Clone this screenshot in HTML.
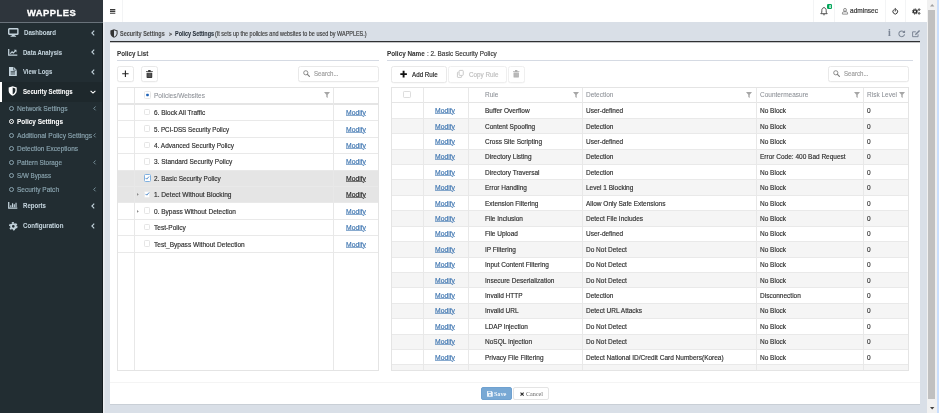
<!DOCTYPE html>
<html>
<head>
<meta charset="utf-8">
<title>WAPPLES</title>
<style>
*{box-sizing:border-box;margin:0;padding:0}
html,body{width:939px;height:413px;overflow:hidden}
body{position:relative;background:#d9dfe7;font-family:"Liberation Sans",sans-serif;font-size:6.5px;color:#333;line-height:1}
.t{position:absolute;white-space:nowrap;line-height:10px;height:10px;transform-origin:0 50%;-webkit-text-stroke:.16px}
.s{font-family:"Liberation Serif",serif}
.b{font-weight:700;-webkit-text-stroke:.05px}
svg{position:absolute;overflow:visible}
div,i{position:absolute}
i{display:block}
#w{left:0;top:0;width:939px;height:413px;will-change:transform}
#side{left:0;top:0;width:103px;height:413px;background:#222d32;border-right:1px solid #141b1f}
#logo{left:0;top:0;width:103px;height:22.6px;background:#2e353c;border-bottom:1px solid #69727a}
.act{left:0;width:102px;background:#1e282c;border-left:2px solid #fff}
.ring{width:5px;height:5px;border:1px solid #8aa4af;border-radius:50%}
#top{left:103px;top:0;width:824px;height:22px;background:#fff}
.vsep{top:0;width:1px;height:22px;background:#f3f4f5}
#sb{left:927px;top:0;width:12px;height:413px;background:#f1f1f1}
#panel{left:110px;top:41px;width:810px;height:363.4px;background:#fff;border-top:1px solid #2f3133;box-shadow:0 .5px .5px rgba(0,0,0,.07)}
.hr{height:1px;background:#d5dae3}
.btn{background:#fff;border:1px solid #e9e9e9;border-radius:2.5px;box-shadow:0 .5px .6px rgba(0,0,0,.04)}
.grid{border:1px solid #e4e4e4;background:#fff;overflow:hidden}
.row{left:0;width:100%;border-bottom:1px solid #e6e6e6}
.vl{top:0;width:1px;height:100%;background:#e8e8e8}
.cb{width:6.6px;height:6.6px;border:1px solid #e5e5e5;border-radius:1.2px;background:#fff}
u{text-decoration:underline;text-decoration-thickness:.5px;text-underline-offset:.3px;text-decoration-color:rgba(59,115,175,.6)}
</style>
</head>
<body>
<div id="w">
<div id="side"></div>
<div id="logo"></div>
<span class="t b" style="left:26.90px;top:8px;font-size:8.90px;color:#fff;transform:scaleX(1.0600);letter-spacing:.45px;-webkit-text-stroke:.3px">WAPPLES</span>
<svg style="left:7.5px;top:27.9px" width="10.6" height="8.8" viewBox="0 0 21 17.5"><rect x="1.4" y="1.4" width="18.2" height="11" rx="1.2" fill="none" stroke="#c3d3dc" stroke-width="2.8"/><path d="M8 13.5H13L13.8 15.6H7.2Z M5 15.4H16V17.5H5Z" fill="#c3d3dc"/></svg>
<span class="t b" style="left:23.75px;top:28px;font-size:7.00px;color:#c3d3dc;transform:scaleX(0.8752);">Dashboard</span>
<svg style="left:90.5px;top:29.5px" width="4.0" height="6.0" viewBox="0 0 4 6"><path d="M3.2 .6 L.9 3 L3.2 5.4" fill="none" stroke="#c3d3dc" stroke-width="1.1"/></svg>
<svg style="left:8.1px;top:48.6px" width="9.4" height="6.8" viewBox="0 0 19 14"><path d="M1.3 0V12.6H19" fill="none" stroke="#c3d3dc" stroke-width="2.6"/><path d="M4.5 9.5L8.2 5.8L10.8 8.2L15 4" fill="none" stroke="#c3d3dc" stroke-width="2.5"/><path d="M11.8 1.6H17.2V7Z" fill="#c3d3dc"/></svg>
<span class="t b" style="left:22.75px;top:48px;font-size:7.00px;color:#c3d3dc;transform:scaleX(0.8543);">Data Analysis</span>
<svg style="left:90.5px;top:49.2px" width="4.0" height="6.0" viewBox="0 0 4 6"><path d="M3.2 .6 L.9 3 L3.2 5.4" fill="none" stroke="#c3d3dc" stroke-width="1.1"/></svg>
<svg style="left:8.9px;top:67.3px" width="7.8" height="9" viewBox="0 0 15.6 18"><path d="M0 0H9.6L15.6 6V18H0Z" fill="#c3d3dc"/><path d="M9.2 .4V6.4H15.2" fill="none" stroke="#222d32" stroke-width="1.3"/><path d="M3.4 9H12.2M3.4 11.6H12.2M3.4 14.2H12.2" stroke="#222d32" stroke-width="1.3"/></svg>
<span class="t b" style="left:23.25px;top:67px;font-size:7.00px;color:#c3d3dc;transform:scaleX(0.8480);">View Logs</span>
<svg style="left:90.5px;top:69px" width="4.0" height="6.0" viewBox="0 0 4 6"><path d="M3.2 .6 L.9 3 L3.2 5.4" fill="none" stroke="#c3d3dc" stroke-width="1.1"/></svg>
<div class="act" style="top:81.5px;height:20px"></div>
<svg style="left:8.1px;top:86.4px" width="9.4" height="9.8" viewBox="0 0 16 18"><path d="M8 .3L15.4 2.9V8.5C15.4 13 12 16.2 8 17.8C4 16.2 .6 13 .6 8.5V2.9Z" fill="#fff"/><path d="M8 2.8V15.2C10.6 13.9 12.9 11.7 12.9 8.3V4.5Z" fill="#1e282c"/></svg>
<span class="t b" style="left:22.75px;top:87px;font-size:7.00px;color:#fff;transform:scaleX(0.8656);">Security Settings</span>
<svg style="left:90px;top:89.8px" width="6" height="4" viewBox="0 0 6 4"><path d="M.6 .8 L3 3.1 L5.4 .8" fill="none" stroke="#fff" stroke-width="1.1"/></svg>
<svg style="left:8.1px;top:202.1px" width="9.4" height="6.8" viewBox="0 0 19 14"><path d="M1.3 0V12.6H19" fill="none" stroke="#c3d3dc" stroke-width="2.6"/><path d="M4.4 6.5H6.8V10.6H4.4Z M8 2.6H10.4V10.6H8Z M11.6 4.8H14V10.6H11.6Z M15.2 1.4H17.6V10.6H15.2Z" fill="#c3d3dc"/></svg>
<span class="t b" style="left:22.90px;top:201px;font-size:7.00px;color:#c3d3dc;transform:scaleX(0.8658);">Reports</span>
<svg style="left:90.5px;top:202.7px" width="4.0" height="6.0" viewBox="0 0 4 6"><path d="M3.2 .6 L.9 3 L3.2 5.4" fill="none" stroke="#c3d3dc" stroke-width="1.1"/></svg>
<svg style="left:8.5px;top:221.5px" width="8.6" height="8.6" viewBox="0 0 16 16"><circle cx="8" cy="8" r="4.2" fill="none" stroke="#c3d3dc" stroke-width="3.4"/><circle cx="8" cy="8" r="6.6" fill="none" stroke="#c3d3dc" stroke-width="2.8" stroke-dasharray="3.7 3.21"/></svg>
<span class="t b" style="left:22.90px;top:221px;font-size:7.00px;color:#c3d3dc;transform:scaleX(0.8805);">Configuration</span>
<svg style="left:90.5px;top:223px" width="4.0" height="6.0" viewBox="0 0 4 6"><path d="M3.2 .6 L.9 3 L3.2 5.4" fill="none" stroke="#c3d3dc" stroke-width="1.1"/></svg>
<i class="ring" style="left:8.6px;top:105.80px;border-color:#8aa4af"></i>
<span class="t" style="left:17.00px;top:104px;font-size:7.00px;color:#8aa4af;transform:scaleX(0.9544);">Network Settings</span>
<svg style="left:93px;top:105.9px" width="3.2" height="4.800000000000001" viewBox="0 0 4 6"><path d="M3.2 .6 L.9 3 L3.2 5.4" fill="none" stroke="#8aa4af" stroke-width="1.0"/></svg>
<i class="ring" style="left:8.6px;top:119.15px;border-color:#fff"></i>
<i style="left:10.5px;top:121.05px;width:1.2px;height:1.2px;background:#fff;border-radius:50%"></i>
<span class="t b" style="left:17.00px;top:117px;font-size:7.00px;color:#fff;transform:scaleX(0.9167);">Policy Settings</span>
<i class="ring" style="left:8.6px;top:132.60px;border-color:#8aa4af"></i>
<span class="t" style="left:17.00px;top:131px;font-size:7.00px;color:#8aa4af;transform:scaleX(0.9542);">Additional Policy Settings</span>
<svg style="left:93px;top:132.7px" width="3.2" height="4.800000000000001" viewBox="0 0 4 6"><path d="M3.2 .6 L.9 3 L3.2 5.4" fill="none" stroke="#8aa4af" stroke-width="1.0"/></svg>
<i class="ring" style="left:8.6px;top:146.40px;border-color:#8aa4af"></i>
<span class="t" style="left:17.00px;top:144px;font-size:7.00px;color:#8aa4af;transform:scaleX(0.9276);">Detection Exceptions</span>
<i class="ring" style="left:8.6px;top:159.90px;border-color:#8aa4af"></i>
<span class="t" style="left:17.00px;top:158px;font-size:7.00px;color:#8aa4af;transform:scaleX(0.9178);">Pattern Storage</span>
<svg style="left:93px;top:160.0px" width="3.2" height="4.800000000000001" viewBox="0 0 4 6"><path d="M3.2 .6 L.9 3 L3.2 5.4" fill="none" stroke="#8aa4af" stroke-width="1.0"/></svg>
<i class="ring" style="left:8.6px;top:173.40px;border-color:#8aa4af"></i>
<span class="t" style="left:17.00px;top:171px;font-size:7.00px;color:#8aa4af;transform:scaleX(0.8919);">S/W Bypass</span>
<i class="ring" style="left:8.6px;top:186.90px;border-color:#8aa4af"></i>
<span class="t" style="left:17.00px;top:185px;font-size:7.00px;color:#8aa4af;transform:scaleX(0.9306);">Security Patch</span>
<svg style="left:93px;top:187.0px" width="3.2" height="4.800000000000001" viewBox="0 0 4 6"><path d="M3.2 .6 L.9 3 L3.2 5.4" fill="none" stroke="#8aa4af" stroke-width="1.0"/></svg>
<div id="top"></div>
<svg style="left:109.8px;top:8.9px" width="5.3" height="4.8" viewBox="0 0 10 9"><path d="M0 1.1H10M0 4.5H10M0 7.9H10" stroke="#3a3a3a" stroke-width="2.1"/></svg>
<i class="vsep" style="left:122px"></i>
<i class="vsep" style="left:813px"></i>
<i class="vsep" style="left:834px"></i>
<i class="vsep" style="left:885px"></i>
<i class="vsep" style="left:905px"></i>
<svg style="left:820px;top:7px" width="8" height="9" viewBox="0 0 16 18"><path d="M8 1.2C4.8 1.8 3.6 4.2 3.6 7V10.5L1.6 13.4H14.4L12.4 10.5V7C12.4 4.2 11.2 1.8 8 1.2Z" fill="none" stroke="#333" stroke-width="1.7" stroke-linejoin="round"/><path d="M6.3 15Q8 17.4 9.7 15" fill="none" stroke="#333" stroke-width="1.5"/></svg>
<i style="left:827px;top:3.7px;width:5.4px;height:5.4px;background:#00a65a;border-radius:1.3px"></i>
<span class="t b" style="left:828.60px;top:2px;font-size:4.40px;color:#fff;transform:scaleX(0.9000);">0</span>
<svg style="left:841.5px;top:8px" width="6" height="6.5" viewBox="0 0 12 13"><circle cx="6" cy="3.8" r="2.9" fill="none" stroke="#555" stroke-width="1.3"/><path d="M.9 12.2V10.5Q.9 7.6 3.8 7.3Q6 8.6 8.2 7.3Q11.1 7.6 11.1 10.5V12.2Z" fill="none" stroke="#555" stroke-width="1.3"/></svg>
<span class="t" style="left:849.70px;top:6px;font-size:7.60px;color:#333;transform:scaleX(0.8608);-webkit-text-stroke:.2px">adminsec</span>
<svg style="left:892.1px;top:7.9px" width="6.5" height="6.5" viewBox="0 0 14 14"><path d="M4.3 3.2A5.2 5.2 0 1 0 9.7 3.2" fill="none" stroke="#222" stroke-width="1.9" stroke-linecap="round"/><path d="M7 .8V6.6" stroke="#222" stroke-width="1.9" stroke-linecap="round"/></svg>
<svg style="left:911.5px;top:7.5px" width="9" height="7" viewBox="0 0 18 14"><circle cx="6" cy="7" r="3.2" fill="none" stroke="#222" stroke-width="2.6"/><circle cx="6" cy="7" r="5.2" fill="none" stroke="#222" stroke-width="2" stroke-dasharray="2 2.08"/><circle cx="14.2" cy="3.2" r="1.6" fill="none" stroke="#222" stroke-width="1.8"/><circle cx="14.2" cy="10.8" r="1.6" fill="none" stroke="#222" stroke-width="1.8"/></svg>
<svg style="left:109.7px;top:29.3px" width="8" height="9" viewBox="0 0 16 18"><path d="M8 .5L15.2 3V8.5C15.2 13 12 16 8 17.6C4 16 .8 13 .8 8.5V3Z" fill="#333"/><path d="M8 2.6V15.4C10.8 14 13.2 11.8 13.2 8.3V4.3Z" fill="#d9dfe7"/></svg>
<span class="t b" style="left:119.70px;top:29px;font-size:6.40px;color:#4d4d4d;transform:scaleX(0.8569);-webkit-text-stroke:.08px">Security Settings</span>
<span class="t b" style="left:168.50px;top:29px;font-size:5.60px;color:#4d4d4d;transform:scaleX(0.9173);-webkit-text-stroke:.2px">&gt;</span>
<span class="t b" style="left:174.90px;top:29px;font-size:6.40px;color:#27303a;transform:scaleX(0.8522);-webkit-text-stroke:.08px">Policy Settings</span>
<span class="t" style="left:215.40px;top:29px;font-size:6.50px;color:#3c3c3c;transform:scaleX(0.8403);">(It sets up the policies and websites to be used by WAPPLES.)</span>
<span class="t b s" style="left:887.60px;top:28px;font-size:10.50px;color:#7a8494;transform:scaleX(0.9500);">i</span>
<svg style="left:897.9px;top:29.6px" width="7.4" height="7.4" viewBox="0 0 14 14"><path d="M11.6 4.2A5.4 5.4 0 1 0 12.4 8" fill="none" stroke="#7a8494" stroke-width="1.9"/><path d="M13.4 .6V5.8H8.2Z" fill="#7a8494"/></svg>
<svg style="left:911.6px;top:29.5px" width="8.6" height="7.6" viewBox="0 0 17 15"><path d="M12 8.4V13.2H1.2V3.6H7.6" fill="none" stroke="#7a8494" stroke-width="1.9"/><path d="M6 10.2L8.6 9.6L16 2.2L14 .2L6.6 7.6Z" fill="#7a8494"/></svg>
<div id="panel"></div>
<i style="left:110px;top:42px;width:810px;height:1px;background:#c4c5c7"></i>
<i style="left:103px;top:22px;width:1px;height:391px;background:#eaedf1"></i><i style="left:104px;top:22px;width:1px;height:391px;background:#e2e5eb"></i>
<i class="hr" style="left:110px;top:382px;width:810px;background:#f4f4f4"></i>
<span class="t b" style="left:116.50px;top:49px;font-size:7.00px;color:#333;transform:scaleX(0.8926);">Policy List</span>
<i class="hr" style="left:116.5px;top:59.8px;width:262.8px"></i>
<span class="t b" style="left:386.75px;top:49px;font-size:7.00px;color:#333;transform:scaleX(0.9068);">Policy Name</span>
<span class="t" style="left:426.50px;top:49px;font-size:7.00px;color:#333;transform:scaleX(0.9101);">: 2. Basic Security Policy</span>
<i class="hr" style="left:386.8px;top:59.8px;width:526.4px"></i>
<div class="btn" style="left:117px;top:66px;width:17px;height:16px;border-color:#e9e9e9"></div>
<svg style="left:0;top:0" width="1" height="1"><path d="M125.4 70.6V77.0M122.2 73.8H128.6" stroke="#222" stroke-width="1.1" fill="none"/></svg>
<div class="btn" style="left:141px;top:66px;width:17px;height:16px;border-color:#e9e9e9"></div>
<svg style="left:145.7px;top:69.8px" width="6.8" height="8" viewBox="0 0 12 14"><path d="M0 2H12V3.6H0Z M3.8 0H8.2V2H3.8Z M1 4.6H11V12.8Q11 14 9.8 14H2.2Q1 14 1 12.8Z" fill="#3a3a3a"/><path d="M3.7 5.6V12.4M6 5.6V12.4M8.3 5.6V12.4" stroke="#fff" stroke-opacity=".35" stroke-width=".9"/></svg>
<div class="btn" style="left:298px;top:66px;width:81px;height:16px;border-color:#e9e9e9"></div>
<svg style="left:303.2px;top:70.4px" width="7" height="7" viewBox="0 0 14 14"><circle cx="5.6" cy="5.6" r="4.2" fill="none" stroke="#808080" stroke-width="1.8"/><path d="M8.8 8.8L12.8 12.8" stroke="#808080" stroke-width="2.4" stroke-linecap="round"/></svg>
<span class="t" style="left:314.00px;top:69px;font-size:7.00px;color:#9c9c9c;transform:scaleX(0.8746);">Search...</span>
<div class="btn" style="left:391px;top:66px;width:56px;height:17px;border-color:#e9e9e9"></div>
<svg style="left:0;top:0" width="1" height="1"><path d="M403.6 70.8V77.39999999999999M400.3 74.1H406.90000000000003" stroke="#111" stroke-width="1.9" fill="none"/></svg>
<span class="t" style="left:411.80px;top:70px;font-size:7.00px;color:#222;transform:scaleX(0.8924);">Add Rule</span>
<div class="btn" style="left:448px;top:66px;width:59px;height:17px;border-color:#efefef"></div>
<svg style="left:456.8px;top:70.2px" width="6.8" height="7.8" viewBox="0 0 13 15"><rect x="4" y=".8" width="8" height="9.6" rx="1.4" fill="none" stroke="#bdbdbd" stroke-width="1.5"/><path d="M3 4.2H1.8Q.8 4.2 .8 5.2V13.2Q.8 14.2 1.8 14.2H7.8Q8.8 14.2 8.8 13.2V11.6" fill="none" stroke="#bdbdbd" stroke-width="1.5"/></svg>
<span class="t" style="left:469.00px;top:70px;font-size:7.00px;color:#bdbdbd;transform:scaleX(0.9026);">Copy Rule</span>
<div class="btn" style="left:508px;top:66px;width:17px;height:17px;border-color:#efefef"></div>
<svg style="left:513.2px;top:70.4px" width="6.4" height="7.6" viewBox="0 0 12 14"><path d="M0 2H12V3.6H0Z M3.8 0H8.2V2H3.8Z M1 4.6H11V12.8Q11 14 9.8 14H2.2Q1 14 1 12.8Z" fill="#b0b0b0"/><path d="M3.7 5.6V12.4M6 5.6V12.4M8.3 5.6V12.4" stroke="#fff" stroke-opacity=".35" stroke-width=".9"/></svg>
<div class="btn" style="left:828px;top:66px;width:81px;height:16px;border-color:#e9e9e9"></div>
<svg style="left:833.2px;top:70.4px" width="7" height="7" viewBox="0 0 14 14"><circle cx="5.6" cy="5.6" r="4.2" fill="none" stroke="#808080" stroke-width="1.8"/><path d="M8.8 8.8L12.8 12.8" stroke="#808080" stroke-width="2.4" stroke-linecap="round"/></svg>
<span class="t" style="left:844.30px;top:69px;font-size:7.00px;color:#9c9c9c;transform:scaleX(0.8746);">Search...</span>
<div class="grid" style="left:117.3px;top:86.7px;width:261.5px;height:283.90000000000003px"></div>
<i style="left:118.3px;top:170.60px;width:259.5px;height:16.45px;background:#e5e5e5"></i>
<i style="left:118.3px;top:187.05px;width:259.5px;height:16.45px;background:#e5e5e5"></i>
<i style="left:118.3px;top:103.4px;width:259.5px;height:1.2px;background:#e5e5e5"></i>
<i style="left:118.3px;top:120.15px;width:259.5px;height:1px;background:#e9e9e9"></i>
<i style="left:118.3px;top:136.60px;width:259.5px;height:1px;background:#e9e9e9"></i>
<i style="left:118.3px;top:153.05px;width:259.5px;height:1px;background:#e9e9e9"></i>
<i style="left:118.3px;top:169.50px;width:259.5px;height:1px;background:#e9e9e9"></i>
<i style="left:118.3px;top:185.95px;width:259.5px;height:1px;background:#e9e9e9"></i>
<i style="left:118.3px;top:202.40px;width:259.5px;height:1px;background:#e9e9e9"></i>
<i style="left:118.3px;top:218.85px;width:259.5px;height:1px;background:#e9e9e9"></i>
<i style="left:118.3px;top:235.30px;width:259.5px;height:1px;background:#e9e9e9"></i>
<i style="left:118.3px;top:251.75px;width:259.5px;height:1px;background:#e9e9e9"></i>
<i class="vl" style="left:133.8px;top:87.7px;height:281.90000000000003px"></i>
<i class="vl" style="left:333.3px;top:87.7px;height:281.90000000000003px"></i>
<i class="cb" style="left:144px;top:91.4px;width:7px;height:7.2px;border-color:#e6e6e6;border-radius:1.5px"></i><svg style="left:0;top:0" width="1" height="1"><rect x="146.2" y="93.7" width="2.6" height="2.6" rx=".7" fill="#1f63b8"/></svg>
<span class="t" style="left:154.10px;top:91px;font-size:7.00px;color:#8a8e94;transform:scaleX(0.9319);-webkit-text-stroke:.05px">Policies/Websites</span>
<svg style="left:324.00px;top:92.45px" width="6" height="6" viewBox="0 0 6 6"><path d="M0 0H6L3.7 2.8V6L2.3 5V2.8Z" fill="#a6a6a6"/></svg>
<i class="cb" style="left:143.8px;top:108.73px"></i>
<span class="t" style="left:153.75px;top:108px;font-size:7.00px;color:#2e2e2e;transform:scaleX(0.9299);">6. Block All Traffic</span>
<span class="t" style="left:345.80px;top:108px;font-size:7.00px;color:#3b73af;transform:scaleX(0.9700);"><u>Modify</u></span>
<i class="cb" style="left:143.8px;top:125.17px"></i>
<span class="t" style="left:153.75px;top:125px;font-size:7.00px;color:#2e2e2e;transform:scaleX(0.8926);">5. PCI-DSS Security Policy</span>
<span class="t" style="left:345.80px;top:125px;font-size:7.00px;color:#3b73af;transform:scaleX(0.9700);"><u>Modify</u></span>
<i class="cb" style="left:143.8px;top:141.62px"></i>
<span class="t" style="left:153.75px;top:141px;font-size:7.00px;color:#2e2e2e;transform:scaleX(0.9261);">4. Advanced Security Policy</span>
<span class="t" style="left:345.80px;top:141px;font-size:7.00px;color:#3b73af;transform:scaleX(0.9700);"><u>Modify</u></span>
<i class="cb" style="left:143.8px;top:158.07px"></i>
<span class="t" style="left:153.75px;top:157px;font-size:7.00px;color:#2e2e2e;transform:scaleX(0.9311);">3. Standard Security Policy</span>
<span class="t" style="left:345.80px;top:157px;font-size:7.00px;color:#3b73af;transform:scaleX(0.9700);"><u>Modify</u></span>
<i class="cb" style="left:143.5px;top:174.22px;width:7.3px;height:7.3px;border:1px solid #7fb0e0;border-radius:1.5px"></i><svg style="left:145px;top:175.82px" width="4.6" height="3.8" viewBox="0 0 8 7"><path d="M.8 3.6L3 5.8L7.2 1" fill="none" stroke="#2f74c0" stroke-width="1.5"/></svg>
<span class="t" style="left:153.75px;top:174px;font-size:7.00px;color:#2e2e2e;transform:scaleX(0.9175);">2. Basic Security Policy</span>
<span class="t" style="left:345.80px;top:174px;font-size:7.00px;color:#222;transform:scaleX(0.9700);"><u style="text-decoration-color:rgba(40,40,40,.6)">Modify</u></span>
<i class="cb" style="left:143.8px;top:190.97px;border-color:#ececec;background:#fff"></i><svg style="left:144.9px;top:192.27px" width="4.6" height="3.8" viewBox="0 0 8 7"><path d="M.8 3.6L3 5.8L7.2 1" fill="none" stroke="#2f74c0" stroke-width="1.6"/></svg>
<svg style="left:137.4px;top:193.17px" width="1.8" height="2.8" viewBox="0 0 2 3"><path d="M0 0L2 1.5L0 3Z" fill="#8a8a8a"/></svg>
<span class="t" style="left:153.75px;top:190px;font-size:7.00px;color:#2e2e2e;transform:scaleX(0.9440);">1. Detect Without Blocking</span>
<span class="t" style="left:345.80px;top:190px;font-size:7.00px;color:#222;transform:scaleX(0.9700);"><u style="text-decoration-color:rgba(40,40,40,.6)">Modify</u></span>
<i class="cb" style="left:143.8px;top:207.42px"></i>
<svg style="left:137.4px;top:209.62px" width="1.8" height="2.8" viewBox="0 0 2 3"><path d="M0 0L2 1.5L0 3Z" fill="#8a8a8a"/></svg>
<span class="t" style="left:153.75px;top:207px;font-size:7.00px;color:#2e2e2e;transform:scaleX(0.9325);">0. Bypass Without Detection</span>
<span class="t" style="left:345.80px;top:207px;font-size:7.00px;color:#3b73af;transform:scaleX(0.9700);"><u>Modify</u></span>
<i class="cb" style="left:143.8px;top:223.87px"></i>
<span class="t" style="left:153.75px;top:223px;font-size:7.00px;color:#2e2e2e;transform:scaleX(0.9397);">Test-Policy</span>
<span class="t" style="left:345.80px;top:223px;font-size:7.00px;color:#3b73af;transform:scaleX(0.9700);"><u>Modify</u></span>
<i class="cb" style="left:143.8px;top:240.32px"></i>
<span class="t" style="left:153.75px;top:240px;font-size:7.00px;color:#2e2e2e;transform:scaleX(0.9362);">Test_Bypass Without Detection</span>
<span class="t" style="left:345.80px;top:240px;font-size:7.00px;color:#3b73af;transform:scaleX(0.9700);"><u>Modify</u></span>
<div class="grid" style="left:391.3px;top:86.7px;width:517.5999999999999px;height:283.90000000000003px"></div>
<i style="left:392.3px;top:118.35px;width:515.5999999999999px;height:15.41px;background:#f5f5f5"></i>
<i style="left:392.3px;top:149.17px;width:515.5999999999999px;height:15.41px;background:#f5f5f5"></i>
<i style="left:392.3px;top:179.99px;width:515.5999999999999px;height:15.41px;background:#f5f5f5"></i>
<i style="left:392.3px;top:210.81px;width:515.5999999999999px;height:15.41px;background:#f5f5f5"></i>
<i style="left:392.3px;top:241.63px;width:515.5999999999999px;height:15.41px;background:#f5f5f5"></i>
<i style="left:392.3px;top:272.45px;width:515.5999999999999px;height:15.41px;background:#f5f5f5"></i>
<i style="left:392.3px;top:303.27px;width:515.5999999999999px;height:15.41px;background:#f5f5f5"></i>
<i style="left:392.3px;top:334.09px;width:515.5999999999999px;height:15.41px;background:#f5f5f5"></i>
<i style="left:392.3px;top:364.91px;width:515.5999999999999px;height:4.69px;background:#f5f5f5"></i>
<i style="left:392.3px;top:101.5px;width:515.5999999999999px;height:1.2px;background:#e5e5e5"></i>
<i style="left:392.3px;top:117.85px;width:515.5999999999999px;height:1px;background:#e9e9e9"></i>
<i style="left:392.3px;top:133.26px;width:515.5999999999999px;height:1px;background:#e9e9e9"></i>
<i style="left:392.3px;top:148.67px;width:515.5999999999999px;height:1px;background:#e9e9e9"></i>
<i style="left:392.3px;top:164.08px;width:515.5999999999999px;height:1px;background:#e9e9e9"></i>
<i style="left:392.3px;top:179.49px;width:515.5999999999999px;height:1px;background:#e9e9e9"></i>
<i style="left:392.3px;top:194.90px;width:515.5999999999999px;height:1px;background:#e9e9e9"></i>
<i style="left:392.3px;top:210.31px;width:515.5999999999999px;height:1px;background:#e9e9e9"></i>
<i style="left:392.3px;top:225.72px;width:515.5999999999999px;height:1px;background:#e9e9e9"></i>
<i style="left:392.3px;top:241.13px;width:515.5999999999999px;height:1px;background:#e9e9e9"></i>
<i style="left:392.3px;top:256.54px;width:515.5999999999999px;height:1px;background:#e9e9e9"></i>
<i style="left:392.3px;top:271.95px;width:515.5999999999999px;height:1px;background:#e9e9e9"></i>
<i style="left:392.3px;top:287.36px;width:515.5999999999999px;height:1px;background:#e9e9e9"></i>
<i style="left:392.3px;top:302.77px;width:515.5999999999999px;height:1px;background:#e9e9e9"></i>
<i style="left:392.3px;top:318.18px;width:515.5999999999999px;height:1px;background:#e9e9e9"></i>
<i style="left:392.3px;top:333.59px;width:515.5999999999999px;height:1px;background:#e9e9e9"></i>
<i style="left:392.3px;top:349.00px;width:515.5999999999999px;height:1px;background:#e9e9e9"></i>
<i style="left:392.3px;top:364.41px;width:515.5999999999999px;height:1px;background:#e9e9e9"></i>
<i class="vl" style="left:423.2px;top:87.7px;height:281.90000000000003px"></i>
<i class="vl" style="left:468px;top:87.7px;height:281.90000000000003px"></i>
<i class="vl" style="left:581.9px;top:87.7px;height:281.90000000000003px"></i>
<i class="vl" style="left:756px;top:87.7px;height:281.90000000000003px"></i>
<i class="vl" style="left:863.3px;top:87.7px;height:281.90000000000003px"></i>
<i class="cb" style="left:403.4px;top:90.90px;width:7.2px;height:7.2px;border-color:#ddd"></i>
<span class="t" style="left:484.60px;top:90px;font-size:7.00px;color:#8a8e94;transform:scaleX(0.9286);-webkit-text-stroke:.05px">Rule</span>
<span class="t" style="left:585.80px;top:90px;font-size:7.00px;color:#8a8e94;transform:scaleX(0.9286);-webkit-text-stroke:.05px">Detection</span>
<span class="t" style="left:759.50px;top:90px;font-size:7.00px;color:#8a8e94;transform:scaleX(0.9286);-webkit-text-stroke:.05px">Countermeasure</span>
<span class="t" style="left:867.00px;top:90px;font-size:7.00px;color:#8a8e94;transform:scaleX(0.9286);-webkit-text-stroke:.05px">Risk Level</span>
<svg style="left:573.00px;top:91.50px" width="6" height="6" viewBox="0 0 6 6"><path d="M0 0H6L3.7 2.8V6L2.3 5V2.8Z" fill="#a6a6a6"/></svg>
<svg style="left:746.20px;top:91.50px" width="6" height="6" viewBox="0 0 6 6"><path d="M0 0H6L3.7 2.8V6L2.3 5V2.8Z" fill="#a6a6a6"/></svg>
<svg style="left:854.00px;top:91.50px" width="6" height="6" viewBox="0 0 6 6"><path d="M0 0H6L3.7 2.8V6L2.3 5V2.8Z" fill="#a6a6a6"/></svg>
<svg style="left:899.20px;top:91.50px" width="6" height="6" viewBox="0 0 6 6"><path d="M0 0H6L3.7 2.8V6L2.3 5V2.8Z" fill="#a6a6a6"/></svg>
<span class="t" style="left:435.00px;top:106px;font-size:7.00px;color:#3b73af;transform:scaleX(0.9700);"><u>Modify</u></span>
<span class="t" style="left:484.60px;top:106px;font-size:7.00px;color:#2e2e2e;transform:scaleX(0.9286);">Buffer Overflow</span>
<span class="t" style="left:585.80px;top:106px;font-size:7.00px;color:#2e2e2e;transform:scaleX(0.9286);">User-defined</span>
<span class="t" style="left:759.50px;top:106px;font-size:7.00px;color:#2e2e2e;transform:scaleX(0.9286);">No Block</span>
<span class="t" style="left:867.00px;top:106px;font-size:7.00px;color:#2e2e2e;transform:scaleX(0.9286);">0</span>
<span class="t" style="left:435.00px;top:122px;font-size:7.00px;color:#3b73af;transform:scaleX(0.9700);"><u>Modify</u></span>
<span class="t" style="left:484.60px;top:122px;font-size:7.00px;color:#2e2e2e;transform:scaleX(0.9286);">Content Spoofing</span>
<span class="t" style="left:585.80px;top:122px;font-size:7.00px;color:#2e2e2e;transform:scaleX(0.9286);">Detection</span>
<span class="t" style="left:759.50px;top:122px;font-size:7.00px;color:#2e2e2e;transform:scaleX(0.9286);">No Block</span>
<span class="t" style="left:867.00px;top:122px;font-size:7.00px;color:#2e2e2e;transform:scaleX(0.9286);">0</span>
<span class="t" style="left:435.00px;top:137px;font-size:7.00px;color:#3b73af;transform:scaleX(0.9700);"><u>Modify</u></span>
<span class="t" style="left:484.60px;top:137px;font-size:7.00px;color:#2e2e2e;transform:scaleX(0.9286);">Cross Site Scripting</span>
<span class="t" style="left:585.80px;top:137px;font-size:7.00px;color:#2e2e2e;transform:scaleX(0.9286);">User-defined</span>
<span class="t" style="left:759.50px;top:137px;font-size:7.00px;color:#2e2e2e;transform:scaleX(0.9286);">No Block</span>
<span class="t" style="left:867.00px;top:137px;font-size:7.00px;color:#2e2e2e;transform:scaleX(0.9286);">0</span>
<span class="t" style="left:435.00px;top:152px;font-size:7.00px;color:#3b73af;transform:scaleX(0.9700);"><u>Modify</u></span>
<span class="t" style="left:484.60px;top:152px;font-size:7.00px;color:#2e2e2e;transform:scaleX(0.9286);">Directory Listing</span>
<span class="t" style="left:585.80px;top:152px;font-size:7.00px;color:#2e2e2e;transform:scaleX(0.9286);">Detection</span>
<span class="t" style="left:759.50px;top:152px;font-size:7.00px;color:#2e2e2e;transform:scaleX(0.9286);">Error Code: 400 Bad Request</span>
<span class="t" style="left:867.00px;top:152px;font-size:7.00px;color:#2e2e2e;transform:scaleX(0.9286);">0</span>
<span class="t" style="left:435.00px;top:168px;font-size:7.00px;color:#3b73af;transform:scaleX(0.9700);"><u>Modify</u></span>
<span class="t" style="left:484.60px;top:168px;font-size:7.00px;color:#2e2e2e;transform:scaleX(0.9286);">Directory Traversal</span>
<span class="t" style="left:585.80px;top:168px;font-size:7.00px;color:#2e2e2e;transform:scaleX(0.9286);">Detection</span>
<span class="t" style="left:759.50px;top:168px;font-size:7.00px;color:#2e2e2e;transform:scaleX(0.9286);">No Block</span>
<span class="t" style="left:867.00px;top:168px;font-size:7.00px;color:#2e2e2e;transform:scaleX(0.9286);">0</span>
<span class="t" style="left:435.00px;top:183px;font-size:7.00px;color:#3b73af;transform:scaleX(0.9700);"><u>Modify</u></span>
<span class="t" style="left:484.60px;top:183px;font-size:7.00px;color:#2e2e2e;transform:scaleX(0.9286);">Error Handling</span>
<span class="t" style="left:585.80px;top:183px;font-size:7.00px;color:#2e2e2e;transform:scaleX(0.9286);">Level 1 Blocking</span>
<span class="t" style="left:759.50px;top:183px;font-size:7.00px;color:#2e2e2e;transform:scaleX(0.9286);">No Block</span>
<span class="t" style="left:867.00px;top:183px;font-size:7.00px;color:#2e2e2e;transform:scaleX(0.9286);">0</span>
<span class="t" style="left:435.00px;top:199px;font-size:7.00px;color:#3b73af;transform:scaleX(0.9700);"><u>Modify</u></span>
<span class="t" style="left:484.60px;top:199px;font-size:7.00px;color:#2e2e2e;transform:scaleX(0.9286);">Extension Filtering</span>
<span class="t" style="left:585.80px;top:199px;font-size:7.00px;color:#2e2e2e;transform:scaleX(0.9286);">Allow Only Safe Extensions</span>
<span class="t" style="left:759.50px;top:199px;font-size:7.00px;color:#2e2e2e;transform:scaleX(0.9286);">No Block</span>
<span class="t" style="left:867.00px;top:199px;font-size:7.00px;color:#2e2e2e;transform:scaleX(0.9286);">0</span>
<span class="t" style="left:435.00px;top:214px;font-size:7.00px;color:#3b73af;transform:scaleX(0.9700);"><u>Modify</u></span>
<span class="t" style="left:484.60px;top:214px;font-size:7.00px;color:#2e2e2e;transform:scaleX(0.9286);">File Inclusion</span>
<span class="t" style="left:585.80px;top:214px;font-size:7.00px;color:#2e2e2e;transform:scaleX(0.9286);">Detect File Includes</span>
<span class="t" style="left:759.50px;top:214px;font-size:7.00px;color:#2e2e2e;transform:scaleX(0.9286);">No Block</span>
<span class="t" style="left:867.00px;top:214px;font-size:7.00px;color:#2e2e2e;transform:scaleX(0.9286);">0</span>
<span class="t" style="left:435.00px;top:229px;font-size:7.00px;color:#3b73af;transform:scaleX(0.9700);"><u>Modify</u></span>
<span class="t" style="left:484.60px;top:229px;font-size:7.00px;color:#2e2e2e;transform:scaleX(0.9286);">File Upload</span>
<span class="t" style="left:585.80px;top:229px;font-size:7.00px;color:#2e2e2e;transform:scaleX(0.9286);">User-defined</span>
<span class="t" style="left:759.50px;top:229px;font-size:7.00px;color:#2e2e2e;transform:scaleX(0.9286);">No Block</span>
<span class="t" style="left:867.00px;top:229px;font-size:7.00px;color:#2e2e2e;transform:scaleX(0.9286);">0</span>
<span class="t" style="left:435.00px;top:245px;font-size:7.00px;color:#3b73af;transform:scaleX(0.9700);"><u>Modify</u></span>
<span class="t" style="left:484.60px;top:245px;font-size:7.00px;color:#2e2e2e;transform:scaleX(0.9286);">IP Filtering</span>
<span class="t" style="left:585.80px;top:245px;font-size:7.00px;color:#2e2e2e;transform:scaleX(0.9286);">Do Not Detect</span>
<span class="t" style="left:759.50px;top:245px;font-size:7.00px;color:#2e2e2e;transform:scaleX(0.9286);">No Block</span>
<span class="t" style="left:867.00px;top:245px;font-size:7.00px;color:#2e2e2e;transform:scaleX(0.9286);">0</span>
<span class="t" style="left:435.00px;top:260px;font-size:7.00px;color:#3b73af;transform:scaleX(0.9700);"><u>Modify</u></span>
<span class="t" style="left:484.60px;top:260px;font-size:7.00px;color:#2e2e2e;transform:scaleX(0.9286);">Input Content Filtering</span>
<span class="t" style="left:585.80px;top:260px;font-size:7.00px;color:#2e2e2e;transform:scaleX(0.9286);">Do Not Detect</span>
<span class="t" style="left:759.50px;top:260px;font-size:7.00px;color:#2e2e2e;transform:scaleX(0.9286);">No Block</span>
<span class="t" style="left:867.00px;top:260px;font-size:7.00px;color:#2e2e2e;transform:scaleX(0.9286);">0</span>
<span class="t" style="left:435.00px;top:276px;font-size:7.00px;color:#3b73af;transform:scaleX(0.9700);"><u>Modify</u></span>
<span class="t" style="left:484.60px;top:276px;font-size:7.00px;color:#2e2e2e;transform:scaleX(0.9286);">Insecure Deserialization</span>
<span class="t" style="left:585.80px;top:276px;font-size:7.00px;color:#2e2e2e;transform:scaleX(0.9286);">Do Not Detect</span>
<span class="t" style="left:759.50px;top:276px;font-size:7.00px;color:#2e2e2e;transform:scaleX(0.9286);">No Block</span>
<span class="t" style="left:867.00px;top:276px;font-size:7.00px;color:#2e2e2e;transform:scaleX(0.9286);">0</span>
<span class="t" style="left:435.00px;top:291px;font-size:7.00px;color:#3b73af;transform:scaleX(0.9700);"><u>Modify</u></span>
<span class="t" style="left:484.60px;top:291px;font-size:7.00px;color:#2e2e2e;transform:scaleX(0.9286);">Invalid HTTP</span>
<span class="t" style="left:585.80px;top:291px;font-size:7.00px;color:#2e2e2e;transform:scaleX(0.9286);">Detection</span>
<span class="t" style="left:759.50px;top:291px;font-size:7.00px;color:#2e2e2e;transform:scaleX(0.9286);">Disconnection</span>
<span class="t" style="left:867.00px;top:291px;font-size:7.00px;color:#2e2e2e;transform:scaleX(0.9286);">0</span>
<span class="t" style="left:435.00px;top:306px;font-size:7.00px;color:#3b73af;transform:scaleX(0.9700);"><u>Modify</u></span>
<span class="t" style="left:484.60px;top:306px;font-size:7.00px;color:#2e2e2e;transform:scaleX(0.9286);">Invalid URL</span>
<span class="t" style="left:585.80px;top:306px;font-size:7.00px;color:#2e2e2e;transform:scaleX(0.9286);">Detect URL Attacks</span>
<span class="t" style="left:759.50px;top:306px;font-size:7.00px;color:#2e2e2e;transform:scaleX(0.9286);">No Block</span>
<span class="t" style="left:867.00px;top:306px;font-size:7.00px;color:#2e2e2e;transform:scaleX(0.9286);">0</span>
<span class="t" style="left:435.00px;top:322px;font-size:7.00px;color:#3b73af;transform:scaleX(0.9700);"><u>Modify</u></span>
<span class="t" style="left:484.60px;top:322px;font-size:7.00px;color:#2e2e2e;transform:scaleX(0.9286);">LDAP Injection</span>
<span class="t" style="left:585.80px;top:322px;font-size:7.00px;color:#2e2e2e;transform:scaleX(0.9286);">Do Not Detect</span>
<span class="t" style="left:759.50px;top:322px;font-size:7.00px;color:#2e2e2e;transform:scaleX(0.9286);">No Block</span>
<span class="t" style="left:867.00px;top:322px;font-size:7.00px;color:#2e2e2e;transform:scaleX(0.9286);">0</span>
<span class="t" style="left:435.00px;top:337px;font-size:7.00px;color:#3b73af;transform:scaleX(0.9700);"><u>Modify</u></span>
<span class="t" style="left:484.60px;top:337px;font-size:7.00px;color:#2e2e2e;transform:scaleX(0.9286);">NoSQL Injection</span>
<span class="t" style="left:585.80px;top:337px;font-size:7.00px;color:#2e2e2e;transform:scaleX(0.9286);">Do Not Detect</span>
<span class="t" style="left:759.50px;top:337px;font-size:7.00px;color:#2e2e2e;transform:scaleX(0.9286);">No Block</span>
<span class="t" style="left:867.00px;top:337px;font-size:7.00px;color:#2e2e2e;transform:scaleX(0.9286);">0</span>
<span class="t" style="left:435.00px;top:353px;font-size:7.00px;color:#3b73af;transform:scaleX(0.9700);"><u>Modify</u></span>
<span class="t" style="left:484.60px;top:353px;font-size:7.00px;color:#2e2e2e;transform:scaleX(0.9286);">Privacy File Filtering</span>
<span class="t" style="left:585.80px;top:353px;font-size:7.00px;color:#2e2e2e;transform:scaleX(0.9286);">Detect National ID/Credit Card Numbers(Korea)</span>
<span class="t" style="left:759.50px;top:353px;font-size:7.00px;color:#2e2e2e;transform:scaleX(0.9286);">No Block</span>
<span class="t" style="left:867.00px;top:353px;font-size:7.00px;color:#2e2e2e;transform:scaleX(0.9286);">0</span>
<div style="left:481px;top:387px;width:31px;height:13px;background:#78a8d4;border:1px solid #6fa1d0;border-radius:2px"></div>
<svg style="left:486.8px;top:390.6px" width="5.8" height="5.8" viewBox="0 0 11 11"><path d="M1 0H8.4L11 2.6V10Q11 11 10 11H1Q0 11 0 10V1Q0 0 1 0Z" fill="#eaf2fa"/><rect x="2.2" y="1" width="5" height="2.8" fill="#78a8d4"/><circle cx="5.5" cy="7.4" r="1.7" fill="#78a8d4"/></svg>
<span class="t s" style="left:493.80px;top:389px;font-size:7.00px;color:#fff;transform:scaleX(0.9113);-webkit-text-stroke:.05px">Save</span>
<div style="left:513px;top:387px;width:36px;height:13px;background:#fff;border:1px solid #e4e4e4;border-radius:2px"></div>
<svg style="left:519.7px;top:391.8px" width="4.2" height="4.2" viewBox="0 0 8 8"><path d="M1 1L7 7M7 1L1 7" stroke="#2a2a2a" stroke-width="2.1"/></svg>
<span class="t s" style="left:526.00px;top:389px;font-size:7.00px;color:#666;transform:scaleX(0.8747);-webkit-text-stroke:0">Cancel</span>
<div id="sb"></div>
<i style="left:937px;top:0;width:2px;height:413px;background:#c9defc"></i>
<i style="left:928px;top:9.5px;width:7px;height:389.5px;background:#c0c0c0"></i>
<svg style="left:930px;top:3.8px" width="4.4" height="2.6" viewBox="0 0 6 3.5"><path d="M0 3.5L3 0L6 3.5Z" fill="#a0a0a0"/></svg>
<svg style="left:930px;top:406.8px" width="4.4" height="2.6" viewBox="0 0 6 3.5"><path d="M0 0L3 3.5L6 0Z" fill="#404040"/></svg>
</div>
</body>
</html>
